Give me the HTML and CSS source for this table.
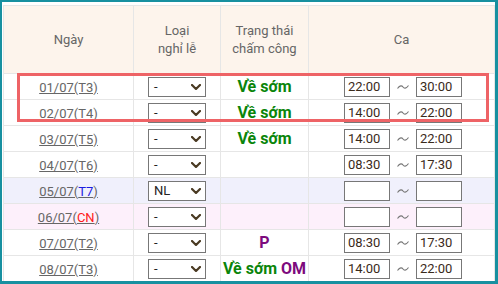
FILE: index.html
```html
<!DOCTYPE html>
<html lang="vi">
<head>
<meta charset="utf-8">
<link rel="stylesheet" href="styles.css">
</head>
<body>
<div class="frame">
  <table class="grid">
    <colgroup>
      <col class="c-date"><col class="c-type"><col class="c-status"><col class="c-shift">
    </colgroup>
    <thead>
      <tr>
        <th>Ngày</th>
        <th>Loại<br>nghỉ lễ</th>
        <th>Trạng thái<br>chấm công</th>
        <th>Ca</th>
      </tr>
    </thead>
    <tbody>
      <tr>
        <td><a class="day" href="#">01/07(T3)</a></td>
        <td><span class="sel"><span class="sel-val">-</span><svg class="chev" viewBox="0 0 10 6"><polyline points="1,1 5,5 9,1"/></svg></span></td>
        <td><span class="st green">Về sớm</span></td>
        <td><div class="shift"><span class="tm">22:00</span><svg class="tilde" viewBox="0 0 12 6"><path d="M0.5 4.5 C3 1, 5 1.5, 6 3 S9 5, 11.5 1.5"/></svg><span class="tm">30:00</span></div></td>
      </tr>
      <tr>
        <td><a class="day" href="#">02/07(T4)</a></td>
        <td><span class="sel"><span class="sel-val">-</span><svg class="chev" viewBox="0 0 10 6"><polyline points="1,1 5,5 9,1"/></svg></span></td>
        <td><span class="st green">Về sớm</span></td>
        <td><div class="shift"><span class="tm">14:00</span><svg class="tilde" viewBox="0 0 12 6"><path d="M0.5 4.5 C3 1, 5 1.5, 6 3 S9 5, 11.5 1.5"/></svg><span class="tm">22:00</span></div></td>
      </tr>
      <tr>
        <td><a class="day" href="#">03/07(T5)</a></td>
        <td><span class="sel"><span class="sel-val">-</span><svg class="chev" viewBox="0 0 10 6"><polyline points="1,1 5,5 9,1"/></svg></span></td>
        <td><span class="st green">Về sớm</span></td>
        <td><div class="shift"><span class="tm">14:00</span><svg class="tilde" viewBox="0 0 12 6"><path d="M0.5 4.5 C3 1, 5 1.5, 6 3 S9 5, 11.5 1.5"/></svg><span class="tm">22:00</span></div></td>
      </tr>
      <tr>
        <td><a class="day" href="#">04/07(T6)</a></td>
        <td><span class="sel"><span class="sel-val">-</span><svg class="chev" viewBox="0 0 10 6"><polyline points="1,1 5,5 9,1"/></svg></span></td>
        <td></td>
        <td><div class="shift"><span class="tm">08:30</span><svg class="tilde" viewBox="0 0 12 6"><path d="M0.5 4.5 C3 1, 5 1.5, 6 3 S9 5, 11.5 1.5"/></svg><span class="tm">17:30</span></div></td>
      </tr>
      <tr class="sat">
        <td><a class="day" href="#">05/07(<span class="blue">T7</span>)</a></td>
        <td><span class="sel"><span class="sel-val">NL</span><svg class="chev" viewBox="0 0 10 6"><polyline points="1,1 5,5 9,1"/></svg></span></td>
        <td></td>
        <td><div class="shift"><span class="tm"></span><svg class="tilde" viewBox="0 0 12 6"><path d="M0.5 4.5 C3 1, 5 1.5, 6 3 S9 5, 11.5 1.5"/></svg><span class="tm"></span></div></td>
      </tr>
      <tr class="sun">
        <td><a class="day" href="#">06/07(<span class="red">CN</span>)</a></td>
        <td><span class="sel"><span class="sel-val">-</span><svg class="chev" viewBox="0 0 10 6"><polyline points="1,1 5,5 9,1"/></svg></span></td>
        <td></td>
        <td><div class="shift"><span class="tm"></span><svg class="tilde" viewBox="0 0 12 6"><path d="M0.5 4.5 C3 1, 5 1.5, 6 3 S9 5, 11.5 1.5"/></svg><span class="tm"></span></div></td>
      </tr>
      <tr>
        <td><a class="day" href="#">07/07(T2)</a></td>
        <td><span class="sel"><span class="sel-val">-</span><svg class="chev" viewBox="0 0 10 6"><polyline points="1,1 5,5 9,1"/></svg></span></td>
        <td><span class="st purple">P</span></td>
        <td><div class="shift"><span class="tm">08:30</span><svg class="tilde" viewBox="0 0 12 6"><path d="M0.5 4.5 C3 1, 5 1.5, 6 3 S9 5, 11.5 1.5"/></svg><span class="tm">17:30</span></div></td>
      </tr>
      <tr>
        <td><a class="day" href="#">08/07(T3)</a></td>
        <td><span class="sel"><span class="sel-val">-</span><svg class="chev" viewBox="0 0 10 6"><polyline points="1,1 5,5 9,1"/></svg></span></td>
        <td><span class="st green">Về sớm <span class="purple">OM</span></span></td>
        <td><div class="shift"><span class="tm">14:00</span><svg class="tilde" viewBox="0 0 12 6"><path d="M0.5 4.5 C3 1, 5 1.5, 6 3 S9 5, 11.5 1.5"/></svg><span class="tm">22:00</span></div></td>
      </tr>
    </tbody>
  </table>
  <div class="highlight"></div>
</div>
</body>
</html>
```
FILE: styles.css
```css
html, body {
  margin: 0;
  padding: 0;
  background: #fff;
}

.frame {
  position: relative;
  box-sizing: border-box;
  width: 498px;
  height: 284px;
  overflow: hidden;
  border-style: solid;
  border-color: #1790a0;
  border-width: 2px 3px 3px 2px;
  padding: 3px 0 0 1px;
  background: #fff;
  font-family: Roboto, "Liberation Sans", sans-serif;
}

.grid {
  border-collapse: collapse;
  table-layout: fixed;
  width: 491px;
}

.c-date { width: 130px; }
.c-type { width: 87px; }
.c-status { width: 88px; }
.c-shift { width: 186px; }

.grid th,
.grid td {
  border: 1px solid #e6e6e6;
  padding: 0;
  text-align: center;
  vertical-align: middle;
}

.grid th {
  height: 67px;
  background: #fdf4ec;
  color: #666;
  font-size: 13px;
  font-weight: normal;
  line-height: 18px;
}

.grid td {
  height: 25px;
}

.grid tr.sat td { background: #f0f0fc; }
.grid tr.sun td { background: #fdf0fb; }

.day {
  color: #666;
  font-size: 13px;
  text-decoration: underline;
}

.blue { color: #1c1ce0; }
.red { color: #ff1a1a; }

.sel {
  display: inline-flex;
  align-items: center;
  justify-content: space-between;
  box-sizing: border-box;
  width: 58px;
  height: 20px;
  padding: 0 4px 0 5px;
  border: 1px solid #777;
  background: #fff;
  vertical-align: middle;
}

.sel-val {
  color: #222;
  font-size: 13px;
}

.chev {
  width: 10px;
  height: 6px;
  fill: none;
  stroke: #4a3a22;
  stroke-width: 2.2;
  stroke-linecap: round;
  stroke-linejoin: round;
}

.st {
  font-size: 16px;
  font-weight: bold;
}

.green { color: #0a850a; }
.purple { color: #7d0a7d; }

.shift {
  display: flex;
  align-items: center;
  justify-content: center;
  gap: 7px;
  padding-left: 3px;
}

.tm {
  box-sizing: border-box;
  width: 46px;
  height: 20px;
  padding: 0 3px;
  border: 1px solid #777;
  background: #fff;
  color: #3a2a1a;
  font-size: 13px;
  line-height: 18px;
  text-align: left;
}

.tilde {
  width: 12px;
  height: 6px;
  fill: none;
  stroke: #777;
  stroke-width: 1.1;
}

.highlight {
  position: absolute;
  left: 15px;
  top: 71px;
  width: 472px;
  height: 49px;
  box-sizing: border-box;
  border: 3px solid #ee6366;
  pointer-events: none;
}
```
